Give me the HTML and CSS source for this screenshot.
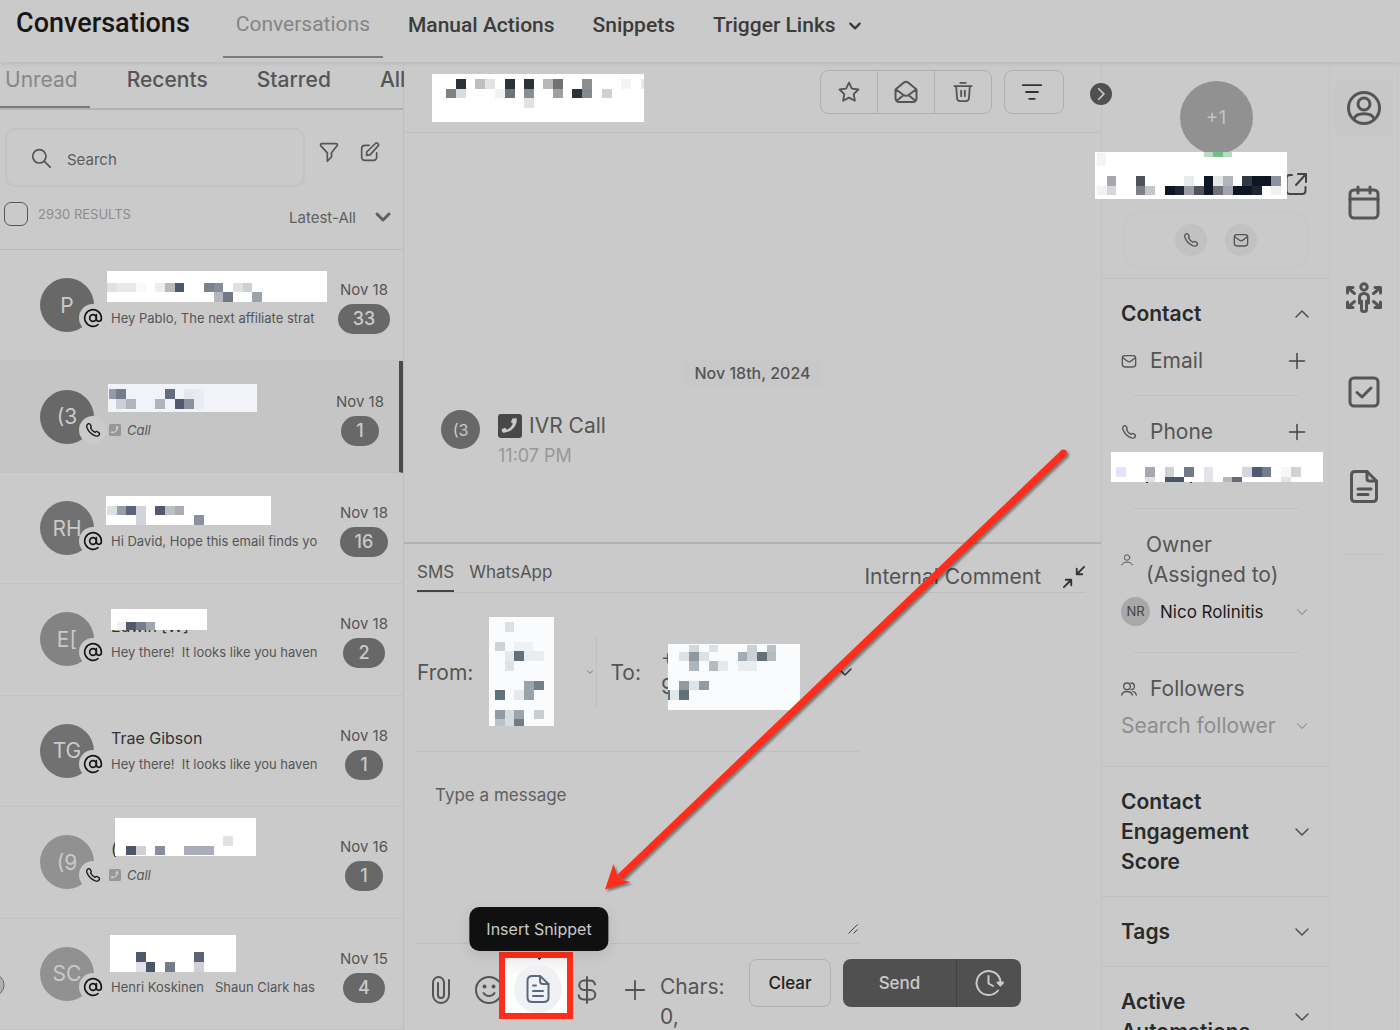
FILE: index.html
```html
<!DOCTYPE html>
<html lang="en">
<head>
  <meta charset="UTF-8">
  <meta name="viewport" content="width=device-width, initial-scale=1.0">
  <title>Conversations</title>
  <link rel="stylesheet" href="styles.css">
</head>
<body>
  <!-- icons used more than once -->
  <svg class="sprite" aria-hidden="true">
    <symbol id="at" viewBox="0 0 24 24"><circle cx="12" cy="12" r="4"/><path d="M16 8v5a3 3 0 0 0 6 0v-1a10 10 0 1 0-4 8"/></symbol>
    <symbol id="phone" viewBox="0 0 24 24"><path d="M8.4 8.9a14 14 0 0 0 6.7 6.6c.6-.4 1-1 1.500-1.200.5-.3 1-.3 1.500 0l3 2c.7.6.9 1.500.5 2.300-.5 1-1.200 2-2.200 2.400-1.200.5-2.500.3-3.700-.1C9.700 18.700 5.400 14.400 3 8.500c-.5-1.200-.7-2.500-.2-3.700.5-1 1.400-1.900 2.500-2.300.8-.3 1.700 0 2.100.7l1.700 2.700c.3.5.3 1 .1 1.500z"/></symbol>
    <symbol id="mail" viewBox="0 0 24 24"><rect x="2" y="4" width="20" height="17" rx="4"/><path d="M3 7.500l6.800 5c1.400 1 3 1 4.400 0l6.800-5"/></symbol>
    <symbol id="down" viewBox="0 0 24 24"><path d="M4 8l8 8 8-8"/></symbol>
    <symbol id="up" viewBox="0 0 24 24"><path d="M4 16l8-8 8 8"/></symbol>
    <symbol id="plus" viewBox="0 0 24 24"><path d="M12 2v20M2 12h20"/></symbol>
    <symbol id="call-square" viewBox="0 0 24 24"><rect width="24" height="24" rx="3" fill="currentColor" stroke="none"/><path class="handset" d="M18.600 4.300c1.200 7.500-6 15-14.200 14.300l-.8-3.300 3.600-1.500 1.700 2a11.500 11.500 0 0 0 6-6l-2-1.700 1.600-3.600z"/></symbol>
  </svg>

  <header class="topbar">
    <h1>Conversations</h1>
    <nav class="topnav">
      <a href="#" class="active">Conversations</a>
      <a href="#">Manual Actions</a>
      <a href="#">Snippets</a>
      <a href="#">Trigger Links <svg class="icon bold s14"><use href="#down"/></svg></a>
    </nav>
  </header>

  <main class="layout">
    <section class="inbox">
      <nav class="tabs">
        <a href="#" class="active">Unread</a>
        <a href="#">Recents</a>
        <a href="#">Starred</a>
        <a href="#">All</a>
      </nav>
      <div class="search-row">
        <label class="search-box">
          <svg class="icon s20" viewBox="0 0 24 24"><circle cx="10" cy="10" r="8"/><path d="M16 16l7 7"/></svg>
          <input type="text" placeholder="Search" aria-label="Search conversations">
        </label>
        <button class="plain" aria-label="Filter"><svg class="icon s20" viewBox="0 0 24 24"><path d="M3.500 2h17C22 2 22.500 3.500 21.700 4.600L15 13v5l-5 5V13L2.300 4.600C1.500 3.500 2 2 3.500 2z"/></svg></button>
        <button class="plain" aria-label="New message"><svg class="icon s20" viewBox="0 0 24 24"><path d="M11 4H6C3 4 2 5 2 8v10c0 3 1 4 4 4h10c3 0 4-1 4-4v-5"/><path d="M8 16v-4L18.500 1.800c1-1 2-.8 3 .2s1 2 0 3L12 15.500z"/></svg></button>
      </div>
      <div class="result-row">
        <input type="checkbox" id="selectAll">
        <label for="selectAll">2930 RESULTS</label>
        <button class="plain sort">Latest-All <svg class="icon bold s18"><use href="#down"/></svg></button>
      </div>

      <ul class="threads">
        <li class="thread">
          <div class="avatar">P<span class="channel"><svg class="icon s20"><use href="#at"/></svg></span></div>
          <div class="summary"><h2>&nbsp;</h2><p>Hey Pablo, The next affiliate strat</p></div>
          <div class="meta"><time>Nov 18</time><span class="count">33</span></div>
        </li>
        <li class="thread selected">
          <div class="avatar">(3<span class="channel"><svg class="icon s16"><use href="#phone"/></svg></span></div>
          <div class="summary"><h2>&nbsp;</h2><p class="call"><svg class="s12"><use href="#call-square"/></svg>Call</p></div>
          <div class="meta"><time>Nov 18</time><span class="count">1</span></div>
        </li>
        <li class="thread">
          <div class="avatar mid">RH<span class="channel"><svg class="icon s20"><use href="#at"/></svg></span></div>
          <div class="summary"><h2>&nbsp;</h2><p>Hi David, Hope this email finds yo</p></div>
          <div class="meta"><time>Nov 18</time><span class="count">16</span></div>
        </li>
        <li class="thread">
          <div class="avatar light">E[<span class="channel"><svg class="icon s20"><use href="#at"/></svg></span></div>
          <div class="summary"><h2>Edwin [W]</h2><p>Hey there!&nbsp; It looks like you haven</p></div>
          <div class="meta"><time>Nov 18</time><span class="count">2</span></div>
        </li>
        <li class="thread">
          <div class="avatar mid">TG<span class="channel"><svg class="icon s20"><use href="#at"/></svg></span></div>
          <div class="summary"><h2>Trae Gibson</h2><p>Hey there!&nbsp; It looks like you haven</p></div>
          <div class="meta"><time>Nov 18</time><span class="count">1</span></div>
        </li>
        <li class="thread">
          <div class="avatar pale">(9<span class="channel"><svg class="icon s16"><use href="#phone"/></svg></span></div>
          <div class="summary"><h2>(</h2><p class="call"><svg class="s12"><use href="#call-square"/></svg>Call</p></div>
          <div class="meta"><time>Nov 16</time><span class="count">1</span></div>
        </li>
        <li class="thread">
          <div class="avatar pale">SC<span class="channel"><svg class="icon s20"><use href="#at"/></svg></span></div>
          <div class="summary"><h2>&nbsp;</h2><p>Henri Koskinen &nbsp; Shaun Clark has</p></div>
          <div class="meta"><time>Nov 15</time><span class="count">4</span></div>
        </li>
      </ul>
    </section>

    <section class="chat">
      <div class="chat-header">
        <div class="button-group">
          <button aria-label="Star"><svg class="icon s22" viewBox="0 0 24 24"><path d="M12 1.800l3.200 6.500 7.100 1-5.200 5 1.300 7.200L12 18.100l-6.400 3.400 1.300-7.200-5.200-5 7.100-1z"/></svg></button>
          <button aria-label="Mark as read"><svg class="icon s24" viewBox="0 0 24 24"><path d="M1.500 9.500L9.800 2.600c1.500-1.100 2.900-1.100 4.400 0l8.300 6.900V18c0 3-1 4-4 4h-13c-3 0-4-1-4-4zM2 9.500l7.500 5.500c1.700 1 3.300 1 5 0L22 9.500M2.500 21l7-6M21.500 21l-7-6"/></svg></button>
          <button aria-label="Delete"><svg class="icon s22" viewBox="0 0 24 24"><path d="M9 2h6M2.500 5.500h19M4.500 5.500l1 13c.2 2.500 1 3.500 3.500 3.500h6c2.500 0 3.300-1 3.500-3.500l1-13M10 10.500v6M14 10.500v6"/></svg></button>
        </div>
        <button class="filter-button" aria-label="Filter messages"><svg class="icon s22" viewBox="0 0 24 24"><path d="M2 4.500h20M5.500 12h13M9 19.500h6"/></svg></button>
        <button class="collapse" aria-label="Collapse panel"><svg class="icon s14" viewBox="0 0 24 24"><path d="M8 3l9 9-9 9"/></svg></button>
      </div>

      <div class="messages">
        <div class="day">Nov 18th, 2024</div>
        <div class="message">
          <div class="avatar small">(3</div>
          <div>
            <p class="event"><svg class="s24"><use href="#call-square"/></svg>IVR Call</p>
            <time>11:07 PM</time>
          </div>
        </div>
      </div>

      <form class="composer">
        <div class="composer-tabs">
          <a href="#" class="active">SMS</a>
          <a href="#">WhatsApp</a>
          <a href="#" class="comment">Internal Comment</a>
          <button type="button" class="plain dark" aria-label="Minimize"><svg class="icon s22" viewBox="0 0 24 24"><path d="M23 1l-8 8M15 3v6h6M1 23l8-8M9 21v-6H3"/></svg></button>
        </div>
        <div class="fields">
          <div class="addresses">
            <span>From:</span>
            <button type="button" class="plain from" aria-label="Choose sender"><svg class="icon s8"><use href="#down"/></svg></button>
            <span class="to">To:</span>
            <span class="number">+<br>9</span>
            <button type="button" class="plain dark" aria-label="Choose recipient"><svg class="icon s18"><use href="#down"/></svg></button>
          </div>
          <div class="textbox">
            <textarea placeholder="Type a message" aria-label="Message"></textarea>
            <svg class="grip" viewBox="0 0 10 10"><path d="M0.500 9.500l9-9M5.500 9.500l4-4"/></svg>
          </div>
        </div>
        <div class="toolbar">
          <button type="button" class="plain clip" aria-label="Attach"><svg class="icon s30" viewBox="0 0 30 30"><path d="M24 5v15a8 8 0 0 1-16 0V7.500a5.500 5.500 0 0 1 11 0V20a3 3 0 0 1-6 0V8"/></svg></button>
          <button type="button" class="plain" aria-label="Emoji"><svg class="icon s30" viewBox="0 0 30 30"><circle cx="15" cy="15" r="13"/><path d="M9.500 18c2.500 4 8.500 4 11 0"/><circle cx="10.500" cy="11.500" r="1" fill="currentColor"/><circle cx="19.500" cy="11.500" r="1" fill="currentColor"/></svg></button>
          <div class="snippet">
            <div class="tooltip" role="tooltip">Insert Snippet</div>
            <button type="button" aria-label="Insert Snippet"><svg class="icon s30" viewBox="0 0 30 30"><path d="M17 2H9.500C6 2 4.500 3.500 4.500 6.500v17C4.500 26.500 6 28 9.500 28h11c3.500 0 5-1.500 5-4.500V10z"/><path d="M17 2v5c0 2 1 3 3 3h5.500M10 11.500h3M10 17h10M10 22h10"/></svg></button>
          </div>
          <button type="button" class="plain" aria-label="Payment"><svg class="icon s30" viewBox="0 0 30 30"><path d="M15 2v26M23 9.500C22.500 7 20.500 5.500 18 5.500h-6a4.700 4.700 0 0 0 0 9.500h6.500a4.700 4.700 0 0 1 0 9.500H12c-3 0-5-1.700-5.300-4.300"/></svg></button>
          <button type="button" class="plain more" aria-label="More"><svg class="icon s22"><use href="#plus"/></svg></button>
          <span class="chars">Chars: 0,</span>
          <button type="button" class="clear">Clear</button>
          <div class="send">
            <button type="submit">Send</button>
            <button type="button" aria-label="Schedule"><svg class="icon s30" viewBox="0 0 30 30"><path d="M26.500 13.500A12 12 0 1 0 24 22.500M14.500 8v7.500l4.500 2.500"/><path d="M23.500 14.500h5.500l-2.600 3z" fill="currentColor"/></svg></button>
          </div>
        </div>
      </form>
    </section>

    <aside class="details">
      <div class="profile">
        <div class="portrait">+1</div>
        <a href="#" class="open" aria-label="Open contact"><svg class="icon s24" viewBox="0 0 24 24"><path d="M8 3H6C3.500 3 2.500 4 2.500 6.500v12C2.500 21 3.500 22 6 22h12c2.500 0 3.500-1 3.500-3.500V15M14 2h8v8M22 2L12 13"/></svg></a>
        <div class="reach">
          <button aria-label="Call"><svg class="icon s16"><use href="#phone"/></svg></button>
          <button aria-label="Email"><svg class="icon s16"><use href="#mail"/></svg></button>
        </div>
      </div>

      <div class="panel contact">
        <button class="panel-title">Contact <svg class="icon s18"><use href="#up"/></svg></button>
        <div class="field">
          <div class="field-name"><svg class="icon s16"><use href="#mail"/></svg><span>Email</span><button class="plain add" aria-label="Add email"><svg class="icon s18"><use href="#plus"/></svg></button></div>
        </div>
        <div class="field phone">
          <div class="field-name"><svg class="icon s16"><use href="#phone"/></svg><span>Phone</span><button class="plain add" aria-label="Add phone"><svg class="icon s18"><use href="#plus"/></svg></button></div>
        </div>
        <div class="field">
          <div class="field-name"><svg class="icon s12" viewBox="0 0 24 24"><circle cx="12" cy="7" r="5.500"/><path d="M1 22c3-8 19-8 22 0"/></svg><span>Owner (Assigned to)</span></div>
          <button class="picker"><span class="owner-badge">NR</span>Nico Rolinitis <svg class="icon s14"><use href="#down"/></svg></button>
        </div>
        <div class="field">
          <div class="field-name"><svg class="icon s16" viewBox="0 0 24 24"><circle cx="9" cy="8" r="5"/><path d="M1 21c2-7 14-7 16 0M15 3a5 5 0 0 1 0 10M18 15.500c2.500.5 4 2.500 5 5.500"/></svg><label for="followers">Followers</label></div>
          <div class="picker"><input type="text" id="followers" placeholder="Search follower"><svg class="icon s14"><use href="#down"/></svg></div>
        </div>
      </div>
      <div class="panel"><button class="panel-title">Contact Engagement Score <svg class="icon s18"><use href="#down"/></svg></button></div>
      <div class="panel"><button class="panel-title">Tags <svg class="icon s18"><use href="#down"/></svg></button></div>
      <div class="panel"><button class="panel-title">Active Automations <svg class="icon s18"><use href="#down"/></svg></button></div>
    </aside>

    <nav class="rail">
      <a href="#" class="active" aria-label="Contact details"><svg class="icon s38" viewBox="0 0 38 38"><circle cx="19" cy="19" r="15.500"/><circle cx="19" cy="15" r="6"/><path d="M9 30c2-7 18-7 20 0"/></svg></a>
      <a href="#" aria-label="Appointments"><svg class="icon s38" viewBox="0 0 38 38"><rect x="5" y="6" width="28" height="28" rx="4"/><path d="M5 15h28M13 3v6M25 3v6"/></svg></a>
      <a href="#" aria-label="Opportunities"><svg class="icon s38" viewBox="0 0 38 38"><circle cx="19" cy="8" r="3.200"/><path d="M14.500 24v-5c0-3 1.500-4.500 4.500-4.500s4.500 1.500 4.500 4.500v5M16.500 22v8.500c0 1.300.8 2 2.500 2s2.500-.7 2.500-2V22"/><path d="M2.500 14V8.500H8M3 9l6.500 5.500M2.500 23v5.500H8M3 28l6.500-5.500M35.500 14V8.500H30M35 9l-6.500 5.500M35.500 23v5.500H30M35 28l-6.500-5.500"/></svg></a>
      <a href="#" aria-label="Tasks"><svg class="icon s38" viewBox="0 0 38 38"><rect x="5" y="4" width="28" height="28" rx="4"/><path d="M12 18.500l5 4.500 9-9"/></svg></a>
      <a href="#" aria-label="Notes"><svg class="icon s38" viewBox="0 0 38 38"><path d="M22 2.500H10C7.500 2.500 6.500 3.500 6.500 6v23c0 2.500 1 3.500 3.500 3.500h18c2.500 0 3.500-1 3.500-3.500V12z"/><path d="M22 2.500v7c0 2 .5 2.500 2.500 2.500h7M13 20h13M13 25.500h10"/></svg></a>
      <hr>
    </nav>
  </main>

  <!-- masked names and numbers, and the pointer to the snippet button -->
  <svg class="annotations" viewBox="0 0 1400 1030" aria-hidden="true">
    <g>
      <rect x="107" y="271" width="220" height="31" fill="#fff"/>
      <rect x="107" y="283" width="10" height="9" fill="#dfe0e4"/><rect x="117" y="283" width="19" height="9" fill="#e8e9eb"/><rect x="136" y="283" width="10" height="9" fill="#f8f9fa"/><rect x="155" y="283" width="10" height="9" fill="#eceef0"/><rect x="165" y="283" width="10" height="9" fill="#b7bbc0"/><rect x="175" y="283" width="9" height="9" fill="#4e586b"/>
      <rect x="204" y="283" width="10" height="9" fill="#7a8292"/><rect x="214" y="283" width="9" height="9" fill="#868c9a"/><rect x="233" y="283" width="10" height="9" fill="#dfe0e4"/><rect x="243" y="283" width="9" height="9" fill="#cdcfd4"/><rect x="214" y="292" width="9" height="10" fill="#b3b7c0"/><rect x="223" y="292" width="10" height="10" fill="#727986"/><rect x="252" y="292" width="10" height="10" fill="#9ba2ae"/>
    </g>
    <g>
      <rect x="108" y="384" width="149" height="28" fill="#f1f3f8"/>
      <rect x="109" y="389" width="7" height="10" fill="#949ba8"/><rect x="116" y="389" width="10" height="10" fill="#757d8b"/><rect x="116" y="399" width="10" height="10" fill="#cccfd5"/><rect x="126" y="399" width="10" height="10" fill="#b0b4bf"/><rect x="155" y="399" width="10" height="10" fill="#b0b4bf"/><rect x="165" y="389" width="10" height="10" fill="#646d7f"/><rect x="175" y="399" width="9" height="10" fill="#505a6c"/><rect x="184" y="389" width="10" height="10" fill="#e4e8ee"/><rect x="184" y="399" width="10" height="10" fill="#8b929e"/><rect x="194" y="389" width="10" height="20" fill="#e8ecf1"/>
    </g>
    <g>
      <rect x="106" y="496" width="165" height="29" fill="#fff"/>
      <rect x="107" y="506" width="10" height="9" fill="#dedfe4"/><rect x="117" y="506" width="9" height="9" fill="#989ea9"/><rect x="126" y="506" width="10" height="9" fill="#59637a"/><rect x="136" y="506" width="10" height="19" fill="#d3d4da"/><rect x="155" y="506" width="10" height="9" fill="#505a6c"/><rect x="165" y="506" width="10" height="9" fill="#bdbdc4"/><rect x="175" y="506" width="9" height="9" fill="#a9adb6"/><rect x="194" y="515" width="10" height="10" fill="#8b919e"/>
    </g>
    <g>
      <rect x="111" y="609" width="96" height="21" fill="#fff"/>
      <rect x="117" y="622" width="9" height="8" fill="#eff0f2"/><rect x="126" y="622" width="10" height="8" fill="#505a6e"/><rect x="136" y="622" width="10" height="8" fill="#757d8b"/><rect x="146" y="622" width="9" height="8" fill="#a0a6b4"/>
    </g>
    <g>
      <rect x="115" y="818" width="141" height="38" fill="#fff"/>
      <rect x="126" y="846" width="10" height="9" fill="#4c566b"/><rect x="136" y="846" width="10" height="9" fill="#cfd0d4"/><rect x="155" y="846" width="10" height="9" fill="#878e9b"/><rect x="184" y="846" width="30" height="9" fill="#a9adb7"/><rect x="223" y="836" width="10" height="10" fill="#e1e2e6"/>
    </g>
    <g>
      <rect x="110" y="935" width="126" height="37" fill="#fff"/>
      <rect x="136" y="952" width="10" height="10" fill="#4e586b"/><rect x="136" y="962" width="10" height="10" fill="#e1e2e5"/><rect x="146" y="962" width="9" height="10" fill="#4a556a"/><rect x="165" y="962" width="10" height="10" fill="#747c8b"/><rect x="194" y="952" width="10" height="10" fill="#5b6375"/><rect x="194" y="962" width="10" height="10" fill="#d0d1d8"/>
      <circle cx="-7" cy="985" r="11" fill="#b0b0b0" stroke="#666"/>
    </g>
    <g>
      <rect x="432" y="74" width="212" height="48" fill="#fff"/>
      <rect x="456" y="79" width="10" height="10" fill="#2b3338"/><rect x="446" y="89" width="10" height="9" fill="#7d8184"/><rect x="456" y="89" width="10" height="9" fill="#dbdcde"/><rect x="475" y="79" width="10" height="10" fill="#bcbec0"/><rect x="485" y="79" width="10" height="10" fill="#e2e4e4"/><rect x="495" y="89" width="10" height="9" fill="#f1f3f3"/><rect x="505" y="79" width="10" height="10" fill="#2b3338"/><rect x="505" y="89" width="10" height="9" fill="#6d7376"/><rect x="524" y="79" width="10" height="10" fill="#2b3338"/><rect x="524" y="89" width="10" height="9" fill="#8b8d8f"/><rect x="524" y="98" width="10" height="10" fill="#e0e2e4"/>
      <rect x="543" y="79" width="10" height="10" fill="#b6b8ba"/><rect x="553" y="79" width="10" height="10" fill="#717273"/><rect x="553" y="89" width="10" height="9" fill="#9d9fa0"/><rect x="572" y="89" width="10" height="9" fill="#2b3338"/><rect x="582" y="79" width="10" height="10" fill="#8b8d8f"/><rect x="582" y="89" width="10" height="9" fill="#85898b"/><rect x="602" y="89" width="10" height="9" fill="#d0d1d3"/><rect x="621" y="79" width="10" height="10" fill="#f3f4f4"/><rect x="641" y="79" width="3" height="10" fill="#e8e9ea"/>
    </g>
    <g>
      <rect x="1095" y="152" width="192" height="47" fill="#fff"/>
      <rect x="1204" y="152" width="28" height="5" fill="#b8dcc3"/><rect x="1213" y="152" width="10" height="5" fill="#73bf8a"/>
      <rect x="1097" y="153" width="9" height="13" fill="#f4f4f4"/><rect x="1107" y="176" width="9" height="10" fill="#a6a7ab"/><rect x="1107" y="186" width="9" height="9" fill="#d7d8db"/><rect x="1097" y="186" width="10" height="9" fill="#f3f3f4"/><rect x="1136" y="176" width="9" height="10" fill="#50525a"/><rect x="1136" y="186" width="9" height="9" fill="#7e7f86"/><rect x="1145" y="186" width="10" height="9" fill="#c4c5c8"/><rect x="1165" y="186" width="10" height="9" fill="#0e1523"/><rect x="1175" y="186" width="9" height="9" fill="#202534"/><rect x="1184" y="176" width="10" height="10" fill="#e9eaea"/><rect x="1184" y="186" width="10" height="9" fill="#9a9da7"/><rect x="1194" y="186" width="10" height="9" fill="#50525e"/><rect x="1204" y="176" width="9" height="19" fill="#0e1523"/><rect x="1213" y="176" width="10" height="10" fill="#e7e7e8"/><rect x="1213" y="186" width="10" height="9" fill="#707278"/><rect x="1223" y="176" width="10" height="10" fill="#b3b4ba"/><rect x="1223" y="186" width="10" height="9" fill="#a0a3ad"/><rect x="1233" y="186" width="19" height="9" fill="#0e1523"/><rect x="1242" y="176" width="10" height="10" fill="#343844"/><rect x="1252" y="176" width="19" height="10" fill="#0e1523"/><rect x="1252" y="186" width="10" height="9" fill="#202534"/><rect x="1271" y="176" width="10" height="10" fill="#8e929e"/><rect x="1271" y="186" width="10" height="9" fill="#f0f0f1"/>
    </g>
    <g>
      <rect x="1111" y="452" width="212" height="30" fill="#fff"/>
      <rect x="1116" y="467" width="10" height="10" fill="#e2e4fb"/><rect x="1145" y="467" width="10" height="10" fill="#a4a9b0"/><rect x="1145" y="477" width="10" height="5" fill="#dfe1e4"/><rect x="1165" y="467" width="9" height="10" fill="#cfd1d5"/><rect x="1165" y="477" width="19" height="5" fill="#4a556a"/><rect x="1184" y="467" width="10" height="10" fill="#727a89"/><rect x="1204" y="467" width="9" height="15" fill="#e3e4e7"/><rect x="1223" y="477" width="9" height="5" fill="#b3b8be"/><rect x="1232" y="477" width="10" height="5" fill="#626c7b"/><rect x="1242" y="467" width="10" height="10" fill="#d5d6dc"/><rect x="1252" y="467" width="10" height="10" fill="#505a6f"/><rect x="1262" y="467" width="9" height="10" fill="#747d8c"/><rect x="1281" y="467" width="10" height="10" fill="#f7f7f8"/><rect x="1291" y="467" width="10" height="10" fill="#d0d2d8"/><rect x="1281" y="477" width="10" height="5" fill="#e3e4e8"/>
      <rect x="1146" y="482" width="2" height="1" fill="#333"/><rect x="1190" y="482" width="2" height="1" fill="#333"/>
    </g>
    <g>
      <rect x="489" y="617" width="65" height="109" fill="#f9fbfd"/>
      <rect x="505" y="622" width="9" height="10" fill="#dde0e2"/><rect x="495" y="642" width="10" height="9" fill="#ced3d6"/><rect x="514" y="642" width="19" height="9" fill="#eef2f5"/><rect x="505" y="651" width="9" height="10" fill="#e5e9ec"/><rect x="514" y="651" width="10" height="10" fill="#60717a"/><rect x="524" y="651" width="20" height="10" fill="#e9edf0"/><rect x="505" y="661" width="9" height="10" fill="#dfe2e4"/><rect x="524" y="681" width="10" height="19" fill="#98a4a9"/><rect x="534" y="681" width="10" height="9" fill="#70808a"/><rect x="495" y="690" width="10" height="10" fill="#60717a"/><rect x="514" y="690" width="10" height="10" fill="#e5e9ec"/><rect x="495" y="710" width="10" height="9" fill="#919ba3"/><rect x="505" y="710" width="9" height="16" fill="#d6dbde"/><rect x="514" y="710" width="10" height="9" fill="#9ca5ac"/><rect x="495" y="719" width="10" height="7" fill="#bcc3c8"/><rect x="514" y="719" width="10" height="7" fill="#6d7e87"/><rect x="534" y="710" width="10" height="9" fill="#c7cdd1"/>
    </g>
    <g>
      <rect x="668" y="644" width="132" height="66" fill="#f9fbfd"/>
      <rect x="689" y="645" width="10" height="7" fill="#d2d7db"/><rect x="709" y="645" width="9" height="7" fill="#dbe0e3"/><rect x="747" y="645" width="10" height="16" fill="#cbd0d4"/><rect x="767" y="645" width="9" height="7" fill="#bac1c5"/><rect x="679" y="652" width="10" height="9" fill="#dde2e5"/><rect x="689" y="652" width="10" height="9" fill="#8e999f"/><rect x="699" y="652" width="10" height="9" fill="#dce1e4"/><rect x="738" y="652" width="9" height="9" fill="#a3acb2"/><rect x="757" y="652" width="10" height="9" fill="#60717a"/><rect x="767" y="652" width="9" height="9" fill="#b5bcc0"/><rect x="689" y="661" width="10" height="10" fill="#adb6bb"/><rect x="709" y="661" width="9" height="10" fill="#b3bbc0"/><rect x="718" y="661" width="10" height="10" fill="#e6eaed"/><rect x="738" y="661" width="19" height="10" fill="#e9edf0"/>
      <rect x="679" y="681" width="10" height="9" fill="#9099a0"/><rect x="689" y="681" width="10" height="9" fill="#e0e3e6"/><rect x="699" y="681" width="10" height="9" fill="#919ba1"/><rect x="668" y="690" width="2" height="10" fill="#60717a"/><rect x="670" y="690" width="9" height="10" fill="#e2e7ea"/><rect x="679" y="690" width="10" height="10" fill="#60717a"/>
    </g>
    <g class="arrow">
      <path d="M1061 450.500l5 5L622 880l-5-5z"/>
      <circle cx="1063.500" cy="453" r="3.500"/>
      <path d="M605 889.500l8.500-25.500 3.500 11 5 5 8.500 2z"/>
    </g>
  </svg>
</body>
</html>
```

FILE: styles.css
```css
* {
  margin: 0;
  padding: 0;
  box-sizing: border-box;
}

body {
  height: 100vh;
  display: flex;
  flex-direction: column;
  overflow: hidden;
  position: relative;
  font-family: Inter, sans-serif;
  font-size: 16px;
  color: #555;
  background: #cacaca;
}

a {
  color: inherit;
  text-decoration: none;
}

button, input, textarea {
  font: inherit;
  color: inherit;
  background: none;
  border: none;
  outline: none;
}

button {
  cursor: pointer;
  display: flex;
  align-items: center;
  justify-content: center;
}

svg {
  display: block;
  flex-shrink: 0;
}

/* icons */
.sprite { position: absolute; width: 0; height: 0; }
.icon {
  fill: none;
  stroke: currentColor;
  stroke-width: 2;
  stroke-linecap: round;
  stroke-linejoin: round;
}
.handset { fill: #cacaca; stroke: none; }
.bold { stroke-width: 4; }
.s8 { width: 8px; height: 8px; }
.s12 { width: 12px; height: 12px; }
.s14 { width: 14px; height: 14px; }
.s16 { width: 16px; height: 16px; }
.s18 { width: 18px; height: 18px; }
.s20 { width: 20px; height: 20px; }
.s22 { width: 22px; height: 22px; }
.s24 { width: 24px; height: 24px; }
.s30 { width: 30px; height: 30px; }
.s38 { width: 38px; height: 38px; stroke-width: 3; }
.dark { color: #333; }

/* top bar */
.topbar {
  height: 62px;
  display: flex;
  padding-left: 16px;
  gap: 33px;
  font-family: Roboto, sans-serif;
  box-shadow: 0 1px 4px rgba(0, 0, 0, 0.1);
}
.topbar h1 {
  font-size: 27px;
  font-weight: 500;
  line-height: 46px;
  color: #161616;
}
.topnav {
  display: flex;
  gap: 12px;
  font-size: 21px;
  font-weight: 500;
  color: #3c3c3c;
}
.topnav a {
  height: 58px;
  padding: 0 13px;
  line-height: 51px;
  display: flex;
  gap: 12px;
}
.topnav .icon { margin-top: 19px; }
.topnav .active {
  line-height: 49px;
  color: #858585;
  font-weight: 400;
  border-bottom: 2px solid #7c7c7c;
}

.layout {
  flex: 1;
  min-height: 0;
  display: grid;
  grid-template-columns: 404px 1fr 229px 70px;
}

/* conversation list */
.inbox {
  display: flex;
  flex-direction: column;
  min-width: 0;
  min-height: 0;
  border-right: 1px solid #bdbdbd;
}
.tabs {
  height: 48px;
  flex-shrink: 0;
  display: flex;
  font-size: 21px;
  font-weight: 500;
  line-height: 36px;
  border-bottom: 2px solid #b2b2b2;
}
.tabs a { padding-left: 49px; flex-shrink: 0; }
.tabs .active {
  padding: 0 12px 0 5px;
  margin-right: -12px;
  font-weight: 400;
  color: #888;
  border-bottom: 2px solid #7a7a7a;
}
.search-row {
  display: flex;
  align-items: center;
  gap: 21px;
  padding: 18px 23px 0 5px;
}
.search-row .plain { margin-bottom: 11px; }
.search-box {
  flex: 1;
  height: 59px;
  display: flex;
  align-items: center;
  gap: 16px;
  padding-left: 24px;
  margin-right: -7px;
  border: 2px solid #c3c3c3;
  border-radius: 10px;
}
.search-box input { width: 100%; min-width: 0; font-size: 15px; padding-top: 3px; }
.search-box input::placeholder { color: #5c5c5c; }
.result-row {
  height: 63px;
  display: flex;
  align-items: center;
  gap: 10px;
  padding: 0 11px 8px 4px;
  font-size: 13px;
  color: #8c8c8c;
  border-bottom: 1px solid #b9b9b9;
}
.result-row input {
  appearance: none;
  width: 24px;
  height: 24px;
  border: 1px solid #555;
  border-radius: 7px;
}
.sort {
  margin: 6px 0 0 auto;
  gap: 18px;
  font-size: 15px;
  color: #606060;
}
.threads {
  flex: 1;
  min-height: 0;
  list-style: none;
  display: grid;
  grid-template-columns: minmax(0, 1fr);
  grid-template-rows: repeat(7, 1fr);
}
.thread {
  display: flex;
  align-items: center;
  padding: 0 9px 0 40px;
  border-bottom: 1px solid #c2c2c2;
}
.selected {
  background: #c5c5c5;
  border-right: 4px solid #4a4a4a;
}
.avatar {
  width: 54px;
  height: 54px;
  flex-shrink: 0;
  border-radius: 50%;
  display: flex;
  align-items: center;
  justify-content: center;
  position: relative;
  font-size: 21px;
  color: #cacaca;
  background: #686868;
}
.mid { background: #717171; }
.light { background: #838383; }
.pale { background: #919191; }
.channel {
  position: absolute;
  right: -13px;
  bottom: 0;
  width: 28px;
  height: 28px;
  border-radius: 50%;
  display: flex;
  align-items: center;
  justify-content: center;
  color: #161616;
  background: #cacaca;
}
.summary {
  flex: 1;
  min-width: 0;
  margin: 2px 14px 0 17px;
}
.summary h2 {
  font-size: 16px;
  font-weight: 400;
  line-height: 24px;
  color: #333;
}
.summary p {
  font-size: 13px;
  line-height: 28px;
  white-space: nowrap;
  overflow: hidden;
}
.summary .call {
  display: flex;
  align-items: center;
  gap: 6px;
  margin-left: -2px;
  font-style: italic;
}
.call svg { color: #979797; }
.meta {
  width: 60px;
  flex-shrink: 0;
  display: flex;
  flex-direction: column;
  align-items: center;
  font-size: 15px;
  line-height: 28px;
}
.count {
  padding: 0 15px;
  font-size: 18px;
  font-weight: 500;
  line-height: 30px;
  border-radius: 15px;
  color: #cacaca;
  background: #686868;
}

/* chat */
.chat {
  display: flex;
  flex-direction: column;
  min-width: 0;
  min-height: 0;
}
.chat-header {
  height: 71px;
  flex-shrink: 0;
  display: flex;
  justify-content: flex-end;
  gap: 12px;
  padding: 8px 37px 0 0;
  position: relative;
  border-bottom: 1px solid #bfbfbf;
}
.button-group { display: flex; }
.button-group button, .filter-button {
  width: 58px;
  height: 44px;
  border: 1px solid #b0b0b0;
}
.button-group button + button { margin-left: -1px; }
.button-group button:first-child { border-radius: 8px 0 0 8px; }
.button-group button:last-child { border-radius: 0 8px 8px 0; }
.chat-header .filter-button {
  width: 60px;
  padding-right: 4px;
  border-radius: 8px;
  color: #333;
}
.collapse {
  position: absolute;
  right: -11px;
  top: 21px;
  width: 22px;
  height: 22px;
  border-radius: 50%;
  color: #cacaca;
  background: #505050;
}
.collapse .icon { stroke-width: 3; }
.messages {
  flex: 1;
  min-height: 0;
  display: flex;
  flex-direction: column;
  justify-content: flex-end;
  padding: 0 37px 72px;
  border-bottom: 2px solid #b3b3b3;
}
.day {
  align-self: center;
  padding: 0 12px;
  font-size: 16px;
  font-weight: 500;
  line-height: 28px;
  border-radius: 4px;
  background: #c8c8c8;
}
.message {
  display: flex;
  gap: 18px;
  padding-top: 23px;
}
.small { width: 39px; height: 39px; font-size: 16px; }
.event {
  display: flex;
  align-items: center;
  gap: 7px;
  font-size: 21px;
  line-height: 32px;
}
.event svg { color: #484848; }
.message time {
  font-size: 18px;
  line-height: 28px;
  color: #989898;
}

/* composer */
.composer { padding: 0 15px 0 13px; }
.composer-tabs {
  height: 49px;
  display: flex;
  gap: 15px;
  font-size: 17px;
  line-height: 56px;
  border-bottom: 1px solid #bebebe;
}
.composer-tabs .active { border-bottom: 2px solid #444; }
.composer-tabs .comment {
  margin-left: auto;
  font-size: 21px;
  line-height: 65px;
}
.composer-tabs .plain { padding: 18px 1px 0 7px; }
.fields { width: 66%; }
.addresses {
  height: 159px;
  display: flex;
  align-items: center;
  font-size: 21px;
  border-bottom: 1px solid #bebebe;
}
.addresses .from {
  height: 72px;
  width: 124px;
  justify-content: flex-end;
  padding-right: 2px;
  border-right: 1px solid #bfbfbf;
}
.to { margin-left: 13px; }
.number {
  margin-left: 20px;
  line-height: 30px;
}
.addresses .dark { margin-left: auto; padding-right: 5px; }
.textbox {
  height: 192px;
  position: relative;
  border-bottom: 1px solid #bebebe;
}
.textbox textarea {
  width: 100%;
  height: 100%;
  padding: 33px 18px;
  font-size: 17px;
  resize: none;
}
.textbox textarea::placeholder { color: #606060; }
.grip {
  position: absolute;
  right: 1px;
  bottom: 9px;
  width: 10px;
  height: 10px;
  stroke: #444;
}
.toolbar {
  height: 86px;
  display: flex;
  align-items: flex-start;
  padding-top: 15px;
}
.toolbar > .plain { margin-top: 16px; }
.clip { margin: 0 19px 0 8px; }
.snippet {
  position: relative;
  flex-shrink: 0;
  width: 74px;
  height: 67px;
  margin: -7px -1px 0 -5px;
  padding: 7px 0 0 4px;
  border: 6px solid #ff2d1c;
  background: linear-gradient(#f3f3f3, #fff 40%);
}
.snippet button {
  width: 48px;
  height: 48px;
  margin: 0 auto;
  border-radius: 50%;
  color: #5a6880;
  background: #eff1f5;
}
.tooltip {
  position: absolute;
  left: calc(50% + 3px);
  bottom: 62px;
  transform: translateX(-50%);
  padding: 0 17px;
  font-size: 16px;
  line-height: 44px;
  white-space: nowrap;
  border-radius: 10px;
  color: #cacaca;
  background: #101010;
  box-shadow: 0 4px 14px rgba(0, 0, 0, 0.1);
}
/* only the tip of the tooltip arrow shows below the frame */
.tooltip::after {
  content: "";
  position: absolute;
  left: 50%;
  bottom: -9px;
  margin-left: -2px;
  border: 2px solid transparent;
  border-top-color: #101010;
  border-bottom: none;
}
.toolbar .more { margin: 20px 14px 0 22px; }
.chars {
  flex: 1;
  padding-right: 20px;
  font-size: 21px;
  line-height: 30px;
  margin-top: 13px;
}
.clear {
  height: 48px;
  width: 82px;
  font-size: 17px;
  font-weight: 500;
  color: #222;
  border: 1px solid #b0b0b0;
  border-radius: 8px;
}
.send {
  display: flex;
  margin: 0 65px 0 12px;
  border-radius: 8px;
  overflow: hidden;
  color: #cacaca;
  background: #505050;
}
.send button {
  width: 64px;
  height: 48px;
}
.send button:first-child {
  width: 114px;
  font-size: 17px;
  font-weight: 500;
  border-right: 1px solid #404040;
}

/* contact details */
.details {
  min-height: 0;
  overflow: hidden;
  border-left: 1px solid #c1c1c1;
  border-right: 1px solid #c3c3c3;
}
.profile {
  height: 217px;
  padding: 19px 21px 0 22px;
  display: flex;
  flex-direction: column;
  align-items: center;
  border-bottom: 1px solid #c0c0c0;
}
.portrait {
  width: 73px;
  height: 73px;
  border-radius: 50%;
  display: flex;
  align-items: center;
  justify-content: center;
  font-size: 19px;
  color: #c2c2c2;
  background: #919191;
}
.open {
  align-self: flex-end;
  margin-top: 18px;
  color: #444;
}
.reach {
  width: 100%;
  height: 56px;
  margin-top: 16px;
  display: flex;
  align-items: center;
  justify-content: center;
  gap: 18px;
  border: 1px solid #c5c5c5;
  border-radius: 12px;
}
.reach button {
  width: 32px;
  height: 32px;
  border-radius: 50%;
  background: #c1c1c1;
}
.panel {
  padding: 20px 18px 19px 19px;
  border-bottom: 1px solid #c0c0c0;
}
.panel-title {
  width: 100%;
  justify-content: space-between;
  text-align: left;
  font-size: 21px;
  font-weight: 600;
  line-height: 30px;
  color: #2a2a2a;
}
.panel-title .icon { color: #505050; }
.contact { padding-bottom: 19px; }
.field { padding-top: 17px; }
.field + .field::before {
  content: "";
  display: block;
  margin: 2px 12px 21px 12px;
  border-top: 1px solid #c1c1c1;
}
.phone { padding-bottom: 42px; }
.field-name {
  display: flex;
  align-items: center;
  gap: 13px;
  font-size: 21px;
  line-height: 30px;
}
.add { margin-left: auto; padding-right: 5px; color: #444; }
.picker {
  width: 100%;
  height: 43px;
  gap: 10px;
  display: flex;
  align-items: center;
  font-size: 17px;
  color: #1c1c1c;
}
.picker .icon { margin-left: auto; margin-right: 2px; color: #999; }
.picker input { width: 160px; font-size: 21px; }
.picker input::placeholder { color: #8d8d8d; }
.owner-badge {
  width: 29px;
  height: 29px;
  border-radius: 50%;
  font-size: 13px;
  line-height: 29px;
  text-align: center;
  color: #444;
  background: #a8a8a8;
}

/* right rail */
.rail {
  display: flex;
  flex-direction: column;
  align-items: center;
  gap: 37px;
  padding-top: 17px;
  margin-right: 2px;
  border-right: 1px solid #c5c5c5;
}
.rail a {
  width: 58px;
  height: 58px;
  display: flex;
  align-items: center;
  justify-content: center;
  border-radius: 6px;
}
.rail .active { background: #c7c7c7; }
.rail hr {
  width: 46px;
  border: none;
  border-top: 1px solid #c0c0c0;
}

.annotations {
  position: absolute;
  left: 0;
  top: 0;
  width: 1400px;
  height: 1030px;
  pointer-events: none;
}
.arrow {
  fill: #ff2d1c;
  filter: drop-shadow(2px 2px 1px rgba(0, 0, 0, 0.4));
}
```
